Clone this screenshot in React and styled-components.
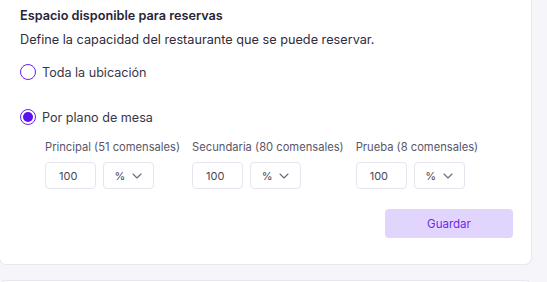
import React from "react";
import styled, { createGlobalStyle } from "styled-components";

const Global = createGlobalStyle`
  html, body { margin: 0; padding: 0; background: #f6f5fa; }
  body { font-family: Inter, "Noto Sans", sans-serif; }
`;

const Page = styled.div`
  width: 547px;
  height: 282px;
  overflow: hidden;
  background: #f6f5fa;
`;

const Card = styled.section`
  width: 533px;
  box-sizing: border-box;
  margin-left: -1px;
  background: #fff;
  border: 1px solid #e8e6f0;
  border-top: none;
  border-radius: 0 0 7px 7px;
  padding: 6px 18px 26px 20px;
`;

const NextCard = styled.div`
  width: 533px;
  height: 20px;
  box-sizing: border-box;
  margin: 15px 0 0 -1px;
  background: #fff;
  border: 1px solid #e8e6f0;
  border-radius: 7px 7px 0 0;
`;

const Title = styled.h2`
  margin: 0;
  font-size: 12.7px;
  line-height: 20px;
  font-weight: 600;
  color: #27243a;
`;

const Subtitle = styled.p`
  margin: 4px 0 0;
  font-size: 12.7px;
  line-height: 20px;
  color: #2f2c3c;
`;

const Option = styled.label`
  display: flex;
  align-items: center;
  gap: 6px;
  height: 24px;
  margin-top: ${(p) => p.$top}px;
  font-size: 12.6px;
  color: #3a3747;
`;

const Radio = styled.span`
  width: 16px;
  height: 16px;
  box-sizing: border-box;
  border-radius: 50%;
  border: 1.5px solid #6a22f2;
  display: flex;
  align-items: center;
  justify-content: center;
  &::after {
    content: "";
    width: 10px;
    height: 10px;
    border-radius: 50%;
    background: #5c0ff0;
    display: ${(p) => (p.$checked ? "block" : "none")};
  }
`;

const Groups = styled.div`
  display: flex;
  gap: 12px;
  padding-left: 25px;
  margin-top: 9px;
`;

const Group = styled.div`
  display: flex;
  flex-direction: column;
  gap: 6px;
`;

const GroupLabel = styled.span`
  font-size: 11.2px;
  line-height: 18px;
  color: #5a5668;
  white-space: nowrap;
`;

const Controls = styled.div`
  display: flex;
  gap: 7px;
`;

const Box = styled.div`
  width: 51px;
  height: 27px;
  box-sizing: border-box;
  border: 1px solid #e6e4ee;
  border-radius: 4px;
  display: flex;
  align-items: center;
  justify-content: ${(p) => (p.$select ? "center" : "flex-start")};
  gap: 7px;
  padding-left: ${(p) => (p.$select ? 0 : 13)}px;
  font-size: 11px;
  color: #4a4756;
`;

const Footer = styled.div`
  display: flex;
  justify-content: flex-end;
  margin-top: 20px;
`;

const Button = styled.button`
  width: 128px;
  height: 29px;
  border: none;
  border-radius: 4px;
  background: #e2d5fd;
  color: #7127f0;
  font-family: inherit;
  font-size: 11.5px;
`;

const Chevron = () => (
  <svg width="10" height="6" viewBox="0 0 10 6" fill="none">
    <path d="M1 1l4 4 4-4" stroke="#6b6878" strokeWidth="1.1" strokeLinecap="round" strokeLinejoin="round" />
  </svg>
);

const zones = [
  "Principal (51 comensales)",
  "Secundaria (80 comensales)",
  "Prueba (8 comensales)",
];

export default function App() {
  return (
    <Page>
      <Global />
      <Card>
        <Title>Espacio disponible para reservas</Title>
        <Subtitle>Define la capacidad del restaurante que se puede reservar.</Subtitle>
        <Option $top={10}>
          <Radio />
          Toda la ubicación
        </Option>
        <Option $top={21}>
          <Radio $checked />
          Por plano de mesa
        </Option>
        <Groups>
          {zones.map((z) => (
            <Group key={z}>
              <GroupLabel>{z}</GroupLabel>
              <Controls>
                <Box>100</Box>
                <Box $select>
                  % <Chevron />
                </Box>
              </Controls>
            </Group>
          ))}
        </Groups>
        <Footer>
          <Button>Guardar</Button>
        </Footer>
      </Card>
      <NextCard />
    </Page>
  );
}
